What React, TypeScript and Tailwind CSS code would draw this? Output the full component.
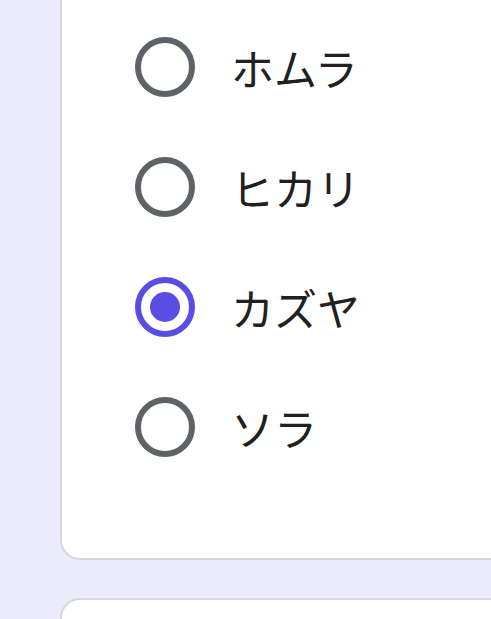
import React from "react";

const options = ["ホムラ", "ヒカリ", "カズヤ", "ソラ"];

function Radio({ checked }: { checked: boolean }) {
  return (
    <span
      className={
        checked
          ? "flex h-[60px] w-[60px] shrink-0 items-center justify-center rounded-full border-[6px] border-[#5a4de3]"
          : "flex h-[60px] w-[60px] shrink-0 items-center justify-center rounded-full border-[6px] border-[#5f6368]"
      }
    >
      {checked && <span className="h-[30px] w-[30px] rounded-full bg-[#5a4de3]" />}
    </span>
  );
}

export default function App() {
  return (
    <div
      className="min-h-[619px] w-[491px] overflow-hidden bg-[#ecebfb] pl-[60px]"
      style={{ fontFamily: '"Noto Sans CJK JP", "Noto Sans", sans-serif' }}
    >
      <div className="rounded-bl-[20px] border-b-2 border-l-2 border-[#d7d7dd] bg-white pb-[71px] pl-[73px] pt-[7px]">
        {options.map((o, i) => (
          <div key={o} className="flex h-[120px] items-center gap-[36px]">
            <Radio checked={i === 2} />
            <span className="text-[43px] leading-none text-[#202020]">{o}</span>
          </div>
        ))}
      </div>
      <div className="mt-[38px] h-[40px] rounded-tl-[20px] border-l-2 border-t-2 border-[#d7d7dd] bg-white" />
    </div>
  );
}
